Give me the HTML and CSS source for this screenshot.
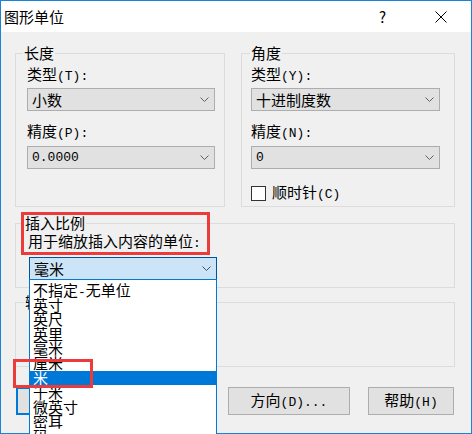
FILE: index.html
```html
<!DOCTYPE html>
<html lang="zh-CN">
<head>
<meta charset="utf-8">
<title>图形单位</title>
<link rel="stylesheet" href="styles.css">
</head>
<body>
<div class="window">
  <div class="titlebar">
    <span class="title">图形单位</span>
    <span class="help">?</span>
    <svg class="close" width="12" height="12" viewBox="0 0 12 12"><path d="M0.5 0.5L11.5 11.5M11.5 0.5L0.5 11.5" stroke="#000" stroke-width="1" fill="none"/></svg>
  </div>
  <div class="content">
    <div class="top-row">
      <div class="group group-length">
        <div class="legend">长度</div>
        <div class="label label-first">类型<span class="a">(T):</span></div>
        <div class="combo"><span>小数</span><svg class="chev" width="9" height="5" viewBox="0 0 9 5"><polyline points="0.5,0.5 4.5,4.5 8.5,0.5" fill="none" stroke="#606060" stroke-width="1"/></svg></div>
        <div class="label label-second">精度<span class="a">(P):</span></div>
        <div class="combo combo-second"><span class="a">0.0000</span><svg class="chev" width="9" height="5" viewBox="0 0 9 5"><polyline points="0.5,0.5 4.5,4.5 8.5,0.5" fill="none" stroke="#606060" stroke-width="1"/></svg></div>
      </div>
      <div class="group group-angle">
        <div class="legend">角度</div>
        <div class="label label-first">类型<span class="a">(Y):</span></div>
        <div class="combo"><span>十进制度数</span><svg class="chev" width="9" height="5" viewBox="0 0 9 5"><polyline points="0.5,0.5 4.5,4.5 8.5,0.5" fill="none" stroke="#606060" stroke-width="1"/></svg></div>
        <div class="label label-second">精度<span class="a">(N):</span></div>
        <div class="combo combo-second"><span class="a">0</span><svg class="chev" width="9" height="5" viewBox="0 0 9 5"><polyline points="0.5,0.5 4.5,4.5 8.5,0.5" fill="none" stroke="#606060" stroke-width="1"/></svg></div>
        <div class="check"><span class="box"></span><span>顺时针<span class="a">(C)</span></span></div>
      </div>
    </div>
    <div class="group group-insert">
      <div class="legend">插入比例</div>
      <div class="label label-insert">用于缩放插入内容的单位<span class="a">:</span></div>
      <div class="combo combo-focus"><span>毫米</span><svg class="chev" width="9" height="5" viewBox="0 0 9 5"><polyline points="0.5,0.5 4.5,4.5 8.5,0.5" fill="none" stroke="#505050" stroke-width="1"/></svg></div>
    </div>
    <div class="group group-output">
      <div class="legend">输出样例</div>
    </div>
    <div class="buttons">
      <button class="btn btn-ok">确定</button>
      <button class="btn btn-cancel">取消</button>
      <button class="btn btn-dir">方向<span class="a">(D)...</span></button>
      <button class="btn btn-help">帮助<span class="a">(H)</span></button>
    </div>
  </div>
  <ul class="dropdown">
    <li>不指定<span class="a">-</span>无单位</li>
    <li>英寸</li>
    <li>英尺</li>
    <li>英里</li>
    <li>毫米</li>
    <li>厘米</li>
    <li class="selected">米</li>
    <li>千米</li>
    <li>微英寸</li>
    <li>密耳</li>
    <li>码</li>
    <li>埃</li>
  </ul>
  <div class="mark mark-label"></div>
  <div class="mark mark-item"></div>
</div>
</body>
</html>
```

FILE: styles.css
```css
html, body {
  margin: 0;
  padding: 0;
  overflow: hidden;
}

body {
  width: 472px;
  height: 434px;
  font-family: "Noto Sans CJK SC", "Noto Sans", sans-serif;
  font-size: 15px;
  color: #000;
}

.a {
  font-family: "Liberation Mono", "DejaVu Sans Mono", monospace;
  font-size: 13px;
}

.window {
  position: relative;
  width: 472px;
  height: 434px;
  box-sizing: border-box;
  border: 1px solid #1883d7;
  background: #f0f0f0;
}

.titlebar {
  height: 31px;
  background: #fff;
  display: flex;
  align-items: center;
  padding: 1px 0 0 3px;
  box-sizing: border-box;
}

.title {
  line-height: 16px;
}

.help {
  margin-left: auto;
  line-height: 16px;
  font-size: 15px;
}

.close {
  margin: 0 24px 0 49px;
  display: block;
}

.content {
  padding: 21px 16px 0 14px;
}

.top-row {
  display: flex;
  gap: 16px;
}

.group {
  border: 1px solid #dcdcdc;
  box-sizing: border-box;
  display: flex;
  flex-direction: column;
  align-items: flex-start;
}

.group-length {
  width: 210px;
  height: 154px;
  padding: 0 0 0 11px;
}

.group-angle {
  width: 214px;
  height: 154px;
  padding: 0 0 0 9px;
}

.legend {
  margin: -9px 0 0 -4px;
  padding: 0 1px;
  line-height: 16px;
  height: 16px;
  background: #f0f0f0;
}

.group-angle .legend {
  margin-left: -1px;
}

.label {
  line-height: 16px;
  height: 16px;
  white-space: nowrap;
}

.label-first {
  margin-top: 5px;
}

.label-second {
  margin-top: 12px;
}

.combo {
  width: 188px;
  height: 23px;
  box-sizing: border-box;
  border: 1px solid #adadad;
  background: #e1e1e1;
  display: flex;
  align-items: center;
  justify-content: space-between;
  padding: 0 5px 0 4px;
  margin-top: 6px;
  line-height: 16px;
}

.combo-second {
  margin-top: 7px;
}

.group-angle .combo {
  width: 189px;
}

.chev {
  display: block;
}

.check {
  margin-top: 15px;
  display: flex;
  align-items: center;
  line-height: 16px;
}

.box {
  width: 15px;
  height: 15px;
  box-sizing: border-box;
  border: 1px solid #333;
  background: #fff;
  margin-right: 6px;
}

.group-insert {
  margin-top: 16px;
  width: 440px;
  height: 65px;
  padding-left: 13px;
}

.group-insert .legend {
  margin-left: -5px;
}

.label-insert {
  margin: 2px 0 0 -1px;
}

.combo-focus {
  margin-top: 8px;
  background: #cce4f7;
  border-color: #005499;
}

.group-output {
  margin-top: 14px;
  width: 440px;
  height: 65px;
  padding-left: 8px;
}

.group-output .legend {
  margin-left: 0;
}

.buttons {
  display: flex;
  margin-top: 20px;
  padding-left: 1px;
}

.btn {
  height: 28px;
  box-sizing: border-box;
  border: 1px solid #adadad;
  background: #e1e1e1;
  font-family: inherit;
  font-size: 15px;
  color: #000;
  padding: 0;
  line-height: 16px;
}

.btn-ok {
  width: 86px;
  border: 2px solid #0078d7;
}

.btn-cancel {
  width: 86px;
  margin-left: 17px;
}

.btn-dir {
  width: 122px;
  margin-left: 23px;
}

.btn-help {
  width: 86px;
  margin-left: 18px;
}

.dropdown {
  position: absolute;
  left: 28px;
  top: 278px;
  width: 188px;
  height: 155px;
  box-sizing: border-box;
  margin: 0;
  padding: 3px 0 0 0;
  list-style: none;
  background: #fff;
  border: 1px solid #0078d7;
  border-bottom: none;
  overflow: hidden;
  font-size: 15px;
}

.dropdown li {
  height: 14.6px;
  line-height: 14.6px;
  padding-left: 3px;
  white-space: nowrap;
}

.dropdown li.selected {
  background: #0078d7;
  color: #fff;
}

.mark {
  position: absolute;
  border: 3px solid #eb3b3b;
  box-sizing: border-box;
}

.mark-label {
  left: 20px;
  top: 211px;
  width: 189px;
  height: 43px;
}

.mark-item {
  left: 12px;
  top: 358px;
  width: 80px;
  height: 29px;
}
```
